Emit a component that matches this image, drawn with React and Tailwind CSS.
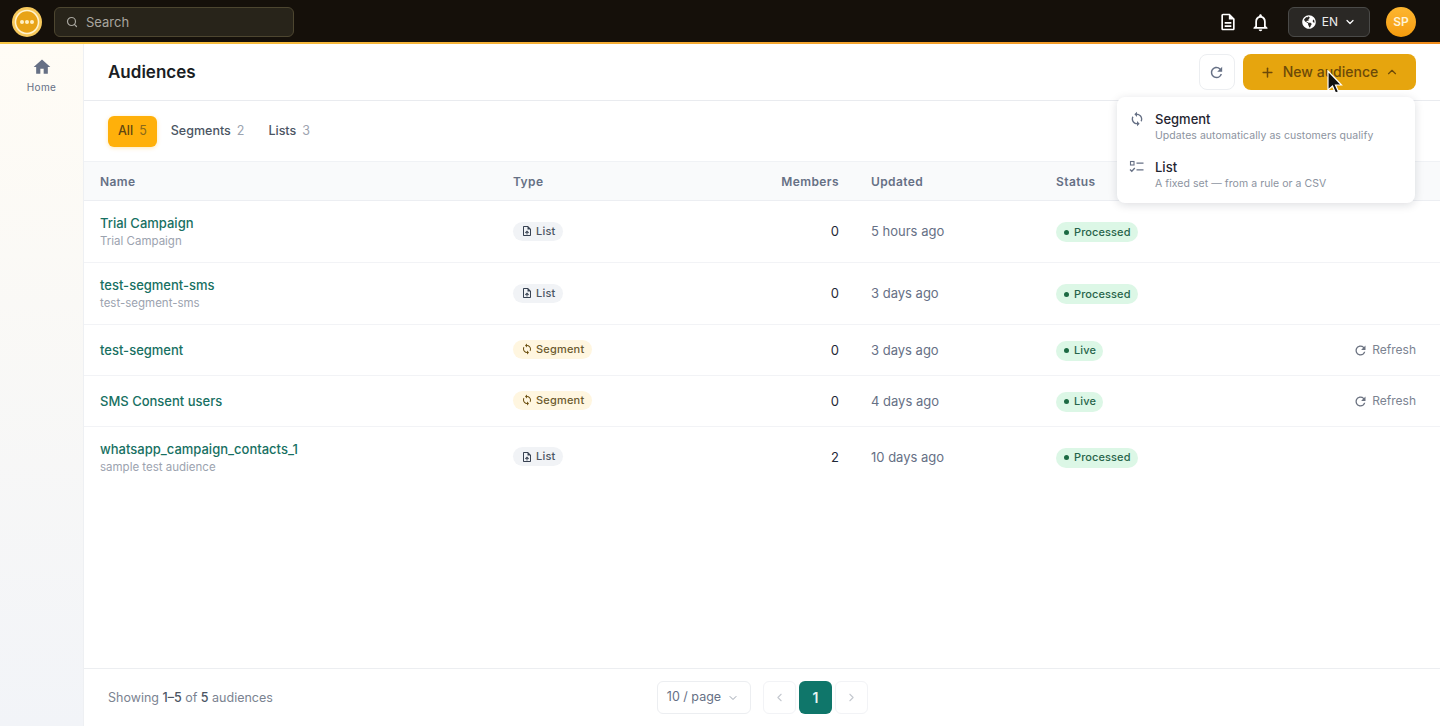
import React from 'react';
import { Search, ChevronDown, ChevronUp, ChevronLeft, ChevronRight, Plus } from 'lucide-react';
import { FaGlobeAmericas } from 'react-icons/fa';
import { MdHome, MdOutlineDescription, MdOutlineNotifications, MdSync, MdRefresh, MdOutlineUploadFile } from 'react-icons/md';

const rows = [
    { name: 'Trial Campaign', sub: 'Trial Campaign', type: 'List', members: 0, updated: '5 hours ago', status: 'Processed', h: 'h-[62px]' },
    { name: 'test-segment-sms', sub: 'test-segment-sms', type: 'List', members: 0, updated: '3 days ago', status: 'Processed', h: 'h-[62px]' },
    { name: 'test-segment', type: 'Segment', members: 0, updated: '3 days ago', status: 'Live', refresh: true, h: 'h-[51px]' },
    { name: 'SMS Consent users', type: 'Segment', members: 0, updated: '4 days ago', status: 'Live', refresh: true, h: 'h-[51px]' },
    { name: 'whatsapp_campaign_contacts_1', sub: 'sample test audience', type: 'List', members: 2, updated: '10 days ago', status: 'Processed', h: 'h-[60px]' },
];

const gridCols = 'grid grid-cols-[413px_281px_45px_32px_185px_1fr] items-center pl-4 pr-6';

const TypeBadge = ({ type }) => {
    if (type === 'List') {
        return (
            <span className="-mt-[1px] inline-flex items-center gap-[3px] h-[19px] px-[8px] rounded-full bg-[#f1f3f6] text-[11px] font-medium tracking-[0.2px] text-[#4b5563]">
                <MdOutlineUploadFile size={12} className="text-[#374151]" />
                List
            </span>
        );
    }
    return (
        <span className="-mt-[2px] inline-flex items-center gap-[3px] h-[19px] px-[8px] rounded-full bg-[#fff6e0] text-[11px] font-medium tracking-[0.2px] text-[#6b5a2e]">
            <MdSync size={12} className="text-[#6b4e0e]" />
            Segment
        </span>
    );
};

const StatusBadge = ({ status }) => (
    <span className="mt-[1px] inline-flex items-center gap-[5px] h-[20px] pl-2 pr-[7px] rounded-full bg-[#dcf7e6] text-[11px] font-medium tracking-[0.1px] text-[#28644a]">
        <span className="w-[5px] h-[5px] rounded-full bg-[#1c6a43]"></span>
        {status}
    </span>
);

const App = () => {
    return (
        <div className="relative h-[726px] w-[1440px] overflow-hidden bg-white font-['Inter',sans-serif] flex flex-col">
            {/* Top bar */}
            <header className="h-[44px] shrink-0 flex items-center pl-3 pr-6 bg-[#15100a] relative">
                <div className="absolute left-0 right-0 bottom-0 h-[2px] bg-gradient-to-r from-[#f6c544] to-[#f08c1c]"></div>
                <svg width="30" height="30" viewBox="0 0 30 30" className="shrink-0">
                    <circle cx="15" cy="15" r="15" fill="#f7c95c" />
                    <circle cx="15" cy="15" r="11.5" fill="#e8a317" stroke="#fff3cf" strokeWidth="1.5" />
                    <circle cx="10" cy="15" r="2" fill="#fff0c4" />
                    <circle cx="15" cy="15" r="2" fill="#fff0c4" />
                    <circle cx="20" cy="15" r="2" fill="#fff0c4" />
                </svg>
                <div className="ml-3 w-[240px] h-[30px] flex items-center gap-[8px] pl-[11px] rounded-md border border-[#4d4630] bg-[#28241a]">
                    <Search size={12} strokeWidth={2.4} className="text-[#a8a69f]" />
                    <span className="pt-[1px] text-[13px] text-[#a8a69f]">Search</span>
                </div>
                <div className="ml-auto flex items-center">
                    <MdOutlineDescription size={20} className="text-white -ml-[1px]" />
                    <MdOutlineNotifications size={21} className="text-white ml-[12px]" />
                    <div className="ml-[17px] w-[82px] h-[30px] flex items-center justify-center gap-[6px] rounded-md border border-[#4a4a48] bg-[#2a2825] text-white">
                        <FaGlobeAmericas size={14} />
                        <span className="text-xs font-normal text-[#ececec]">EN</span>
                        <ChevronDown size={12} strokeWidth={2.4} />
                    </div>
                    <div className="ml-[16px] w-[30px] h-[30px] rounded-full bg-gradient-to-b from-[#fdb62f] to-[#f59c0b] flex items-center justify-center text-xs font-semibold text-[#fff3d6]">SP</div>
                </div>
            </header>

            <div className="flex-1 flex min-h-0">
                {/* Sidebar */}
                <aside className="w-[84px] shrink-0 border-r border-[#eef0f3] bg-gradient-to-b from-[#fffcf5] to-[#f2f4f8] flex flex-col items-center pt-[13px]">
                    <MdHome size={20} className="text-[#667085]" />
                    <span className="mt-[3px] text-[10px] font-normal tracking-[0.4px] text-[#667085]">Home</span>
                </aside>

                {/* Main */}
                <main className="flex-1 min-w-0 flex flex-col">
                    <div className="h-[57px] shrink-0 flex items-center justify-between pl-6 pr-6 border-b border-[#e9ebef]">
                        <h1 className="pt-[2px] text-[17px] font-semibold text-[#1a1d23]">Audiences</h1>
                        <div className="flex items-center gap-2">
                            <button className="w-9 h-9 flex items-center justify-center rounded-lg border border-[#eceef1] bg-white">
                                <MdRefresh size={17} className="text-[#667085] -ml-[1px]" />
                            </button>
                            <button className="w-[173px] h-9 flex items-center justify-center gap-[8px] rounded-lg bg-[#e6a50e] text-[#6d4a08] text-sm font-medium">
                                <Plus size={15} strokeWidth={2.4} />
                                New audience
                                <ChevronUp size={14} className="-ml-[1px]" />
                            </button>
                        </div>
                    </div>

                    {/* Tabs */}
                    <div className="h-[61px] shrink-0 flex items-center gap-1 pl-6 border-b border-[#f0f2f5] text-[12.5px]">
                        <span className="h-[31px] px-[10px] pt-[1px] flex items-center gap-[6px] rounded-md bg-[#ffb00a] font-medium text-[#5f4610] shadow-[0_1px_4px_rgba(255,176,10,0.3)]">
                            All <span className="text-[#8a6a1b] font-normal">5</span>
                        </span>
                        <span className="h-[31px] px-[10px] pt-[1px] flex items-center gap-[6px] font-medium text-[#4b5563]">
                            Segments <span className="text-[#9ca3af] font-normal">2</span>
                        </span>
                        <span className="h-[31px] px-[10px] pt-[1px] flex items-center gap-[6px] font-medium text-[#4b5563]">
                            Lists <span className="text-[#9ca3af] font-normal">3</span>
                        </span>
                    </div>

                    {/* Table */}
                    <div className={`${gridCols} h-[39px] pt-[1px] shrink-0 bg-[#f9fafb] border-b border-[#eceef2] text-xs font-semibold tracking-[0.4px] text-[#667085]`}>
                        <span>Name</span>
                        <span>Type</span>
                        <span className="text-right whitespace-nowrap justify-self-end">Members</span>
                        <span></span>
                        <span>Updated</span>
                        <span>Status</span>
                    </div>
                    <div className="flex-1 min-h-0">
                        {rows.map((row) => (
                            <div key={row.name} className={`${gridCols} ${row.h} border-b border-[#f2f3f6] last:border-b-0`}>
                                <div>
                                    <div className="text-[13px] font-medium leading-[18px] text-[#177062]">{row.name}</div>
                                    {row.sub && <div className="mt-[1px] text-[11.5px] leading-4 text-[#9ca3af]">{row.sub}</div>}
                                </div>
                                <div className="flex items-center"><TypeBadge type={row.type} /></div>
                                <span className="pt-[1px] text-right text-[13px] text-[#1f2937]">{row.members}</span>
                                <span></span>
                                <span className="pt-[1px] text-[13px] text-[#667085]">{row.updated}</span>
                                <div className="flex items-center justify-between">
                                    <StatusBadge status={row.status} />
                                    {row.refresh && (
                                        <span className="flex items-center gap-[4px] text-xs font-normal text-[#7b8391]">
                                            <MdRefresh size={15} className="text-[#6b7280]" />
                                            Refresh
                                        </span>
                                    )}
                                </div>
                            </div>
                        ))}
                    </div>

                    {/* Footer */}
                    <div className="h-[58px] pt-[1px] shrink-0 relative flex items-center pl-6 border-t border-[#eceef1] text-[12.5px] text-[#7b8391]">
                        <span>Showing <b className="font-medium text-[#4b5563]">1–5</b> of <b className="font-medium text-[#4b5563]">5</b> audiences</span>
                        <div className="absolute left-[573px] top-[12px] flex items-center">
                            <div className="w-[94px] h-[33px] flex items-center justify-center gap-[6px] pr-[2px] rounded-md border border-[#eceef1] text-[12.5px] text-[#667085]">
                                10 / page <ChevronDown size={12} className="text-[#9ca3af]" />
                            </div>
                            <div className="ml-3 w-[33px] h-[33px] flex items-center justify-center rounded-md border border-[#f2f3f6]"><ChevronLeft size={13} className="text-[#c4c8cf]" /></div>
                            <div className="ml-[3px] w-[33px] h-[33px] flex items-center justify-center rounded-md bg-[#0f766a] text-sm font-semibold text-[#e7f5f2]">1</div>
                            <div className="ml-[3px] w-[33px] h-[33px] flex items-center justify-center rounded-md border border-[#f2f3f6]"><ChevronRight size={13} className="text-[#c4c8cf]" /></div>
                        </div>
                    </div>
                </main>
            </div>

            {/* Dropdown */}
            <div className="absolute left-[1117px] top-[97px] w-[298px] h-[106px] rounded-lg bg-white shadow-[0_2px_10px_rgba(16,24,40,0.14)] pt-[13px] pl-[12px]">
                <div className="flex">
                    <MdSync size={16} className="text-[#667085] mt-[1px]" />
                    <div className="ml-[10px]">
                        <div className="text-[13px] font-medium leading-[18px] text-[#1f2430]">Segment</div>
                        <div className="text-[10.5px] leading-[15px] tracking-[0.05px] text-[#8c93a0]">Updates automatically as customers qualify</div>
                    </div>
                </div>
                <div className="flex mt-[15px]">
                    <svg width="16" height="16" viewBox="0 0 16 16" fill="none" stroke="#667085" className="mt-[1px]">
                        <rect x="1.5" y="2.5" width="3.5" height="3.5" strokeWidth="1.1" />
                        <path d="M7.5 4.2H14.5M7.5 10.8H14.5" strokeWidth="1.3" />
                        <path d="M1 10.5L2.8 12.3L5.8 9" strokeWidth="1.3" />
                    </svg>
                    <div className="ml-[10px]">
                        <div className="text-[13px] font-medium leading-[18px] text-[#1f2430]">List</div>
                        <div className="text-[10.5px] leading-[15px] tracking-[0.05px] text-[#8c93a0]">A fixed set — from a rule or a CSV</div>
                    </div>
                </div>
            </div>

            {/* Mouse cursor */}
            <svg width="18" height="26" viewBox="0 0 18 26" className="absolute left-[1326px] top-[70px]">
                <path d="M2 1 L2 20 L6.5 16 L9.5 23 L12.5 21.7 L9.5 15 L15.5 15 Z" fill="#111" stroke="#fff" strokeWidth="1.2" />
            </svg>
        </div>
    );
};

export default App;
